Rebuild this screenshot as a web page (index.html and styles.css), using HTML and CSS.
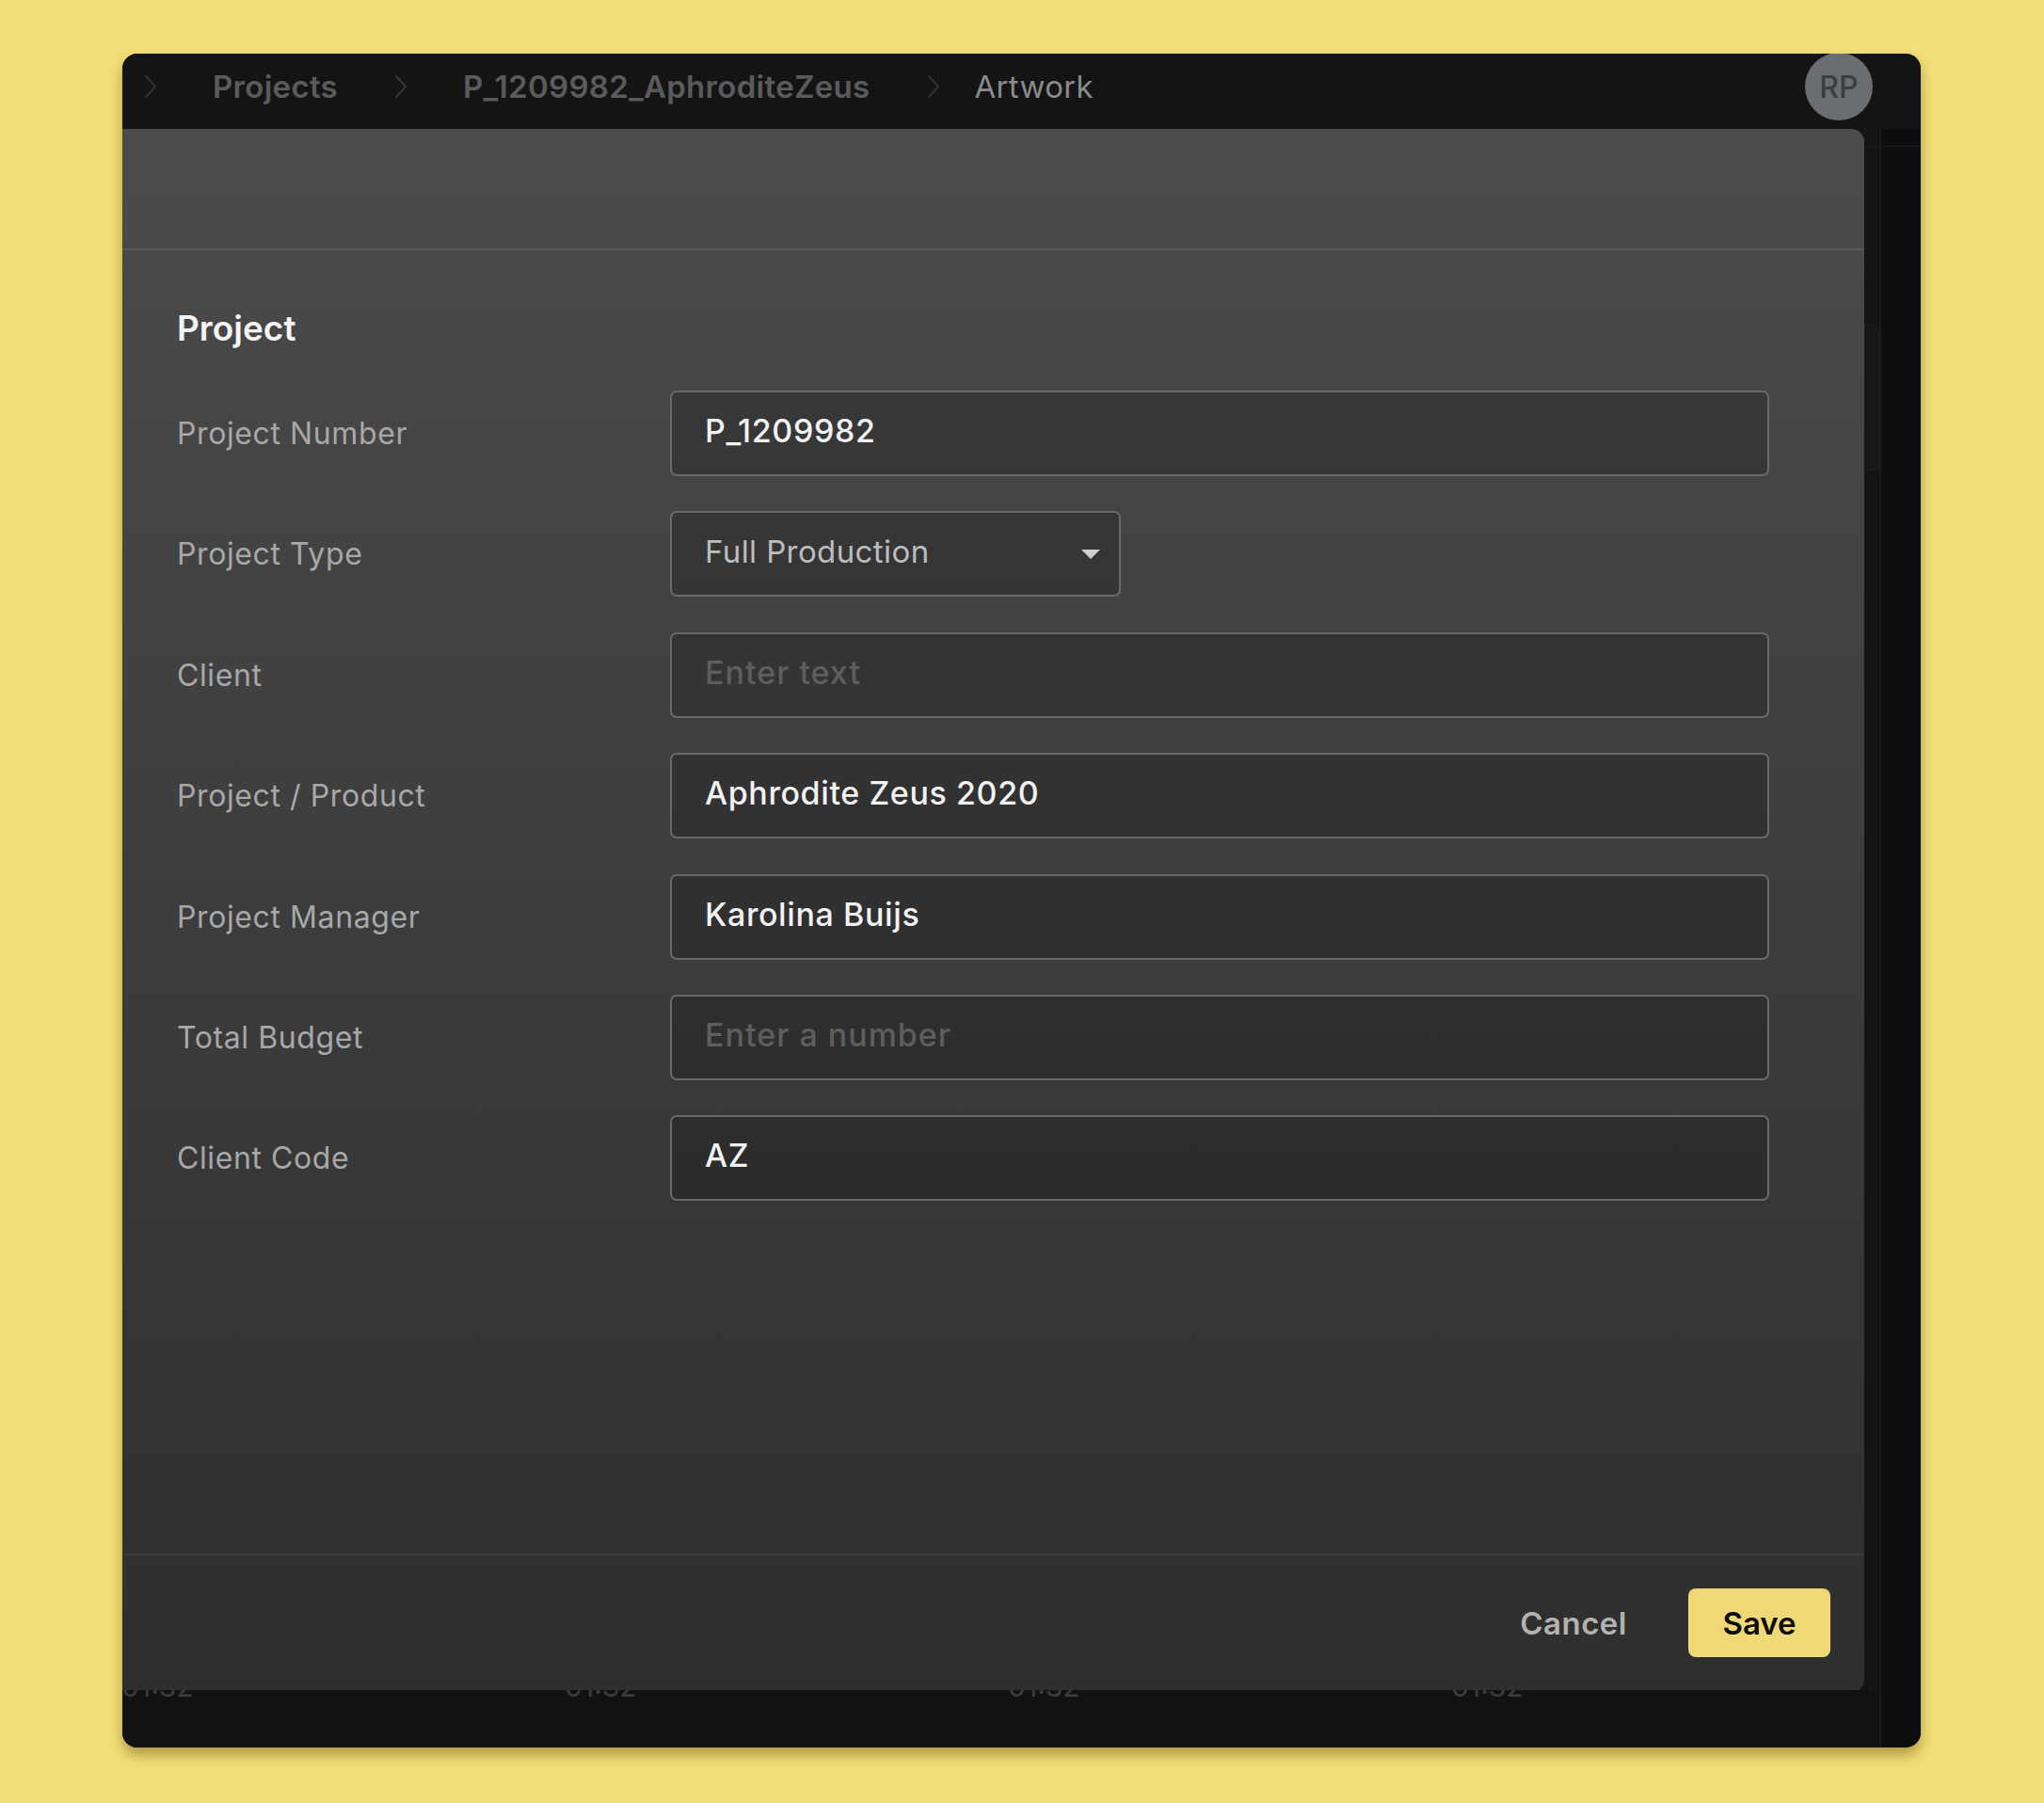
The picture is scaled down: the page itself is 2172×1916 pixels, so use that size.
FILE: index.html
```html
<!DOCTYPE html>
<html lang="en">

<head>
  <meta charset="UTF-8">
  <meta name="viewport" content="width=device-width, initial-scale=1.0">
  <title>Project</title>
  <link rel="stylesheet" href="styles.css">
</head>

<body>
  <div class="window">
    <div class="topbar">
      <div class="crumbs">
        <svg class="chev first_chev" width="16" height="30" viewBox="0 0 16 30"><path d="M3 4 L13 15 L3 26" fill="none" stroke="#353535" stroke-width="2" stroke-linecap="round" stroke-linejoin="round"/></svg>
        <span class="crumb">Projects</span>
        <svg class="chev" width="16" height="30" viewBox="0 0 16 30"><path d="M3 4 L13 15 L3 26" fill="none" stroke="#353535" stroke-width="2" stroke-linecap="round" stroke-linejoin="round"/></svg>
        <span class="crumb">P_1209982_AphroditeZeus</span>
        <svg class="chev" width="16" height="30" viewBox="0 0 16 30"><path d="M3 4 L13 15 L3 26" fill="none" stroke="#353535" stroke-width="2" stroke-linecap="round" stroke-linejoin="round"/></svg>
        <span class="crumb current">Artwork</span>
      </div>
      <div class="avatar">RP</div>
    </div>

    <div class="main">
      <div class="stage">
        <div class="stage_top">
          <div class="modal">
            <div class="modal_head"></div>

            <div class="modal_body">
              <div class="section_title">Project</div>

              <div class="rows">
                <div class="row">
                  <div class="label">Project Number</div>
                  <div class="field value">P_1209982</div>
                </div>
                <div class="row">
                  <div class="label">Project Type</div>
                  <div class="field select">
                    <span>Full Production</span>
                    <svg width="22" height="12" viewBox="0 0 22 12"><path d="M1 1 L21 1 L11 11 Z" fill="#cfcfcf"/></svg>
                  </div>
                </div>
                <div class="row">
                  <div class="label">Client</div>
                  <div class="field placeholder">Enter text</div>
                </div>
                <div class="row">
                  <div class="label">Project / Product</div>
                  <div class="field value">Aphrodite Zeus 2020</div>
                </div>
                <div class="row">
                  <div class="label">Project Manager</div>
                  <div class="field value">Karolina Buijs</div>
                </div>
                <div class="row">
                  <div class="label">Total Budget</div>
                  <div class="field placeholder">Enter a number</div>
                </div>
                <div class="row">
                  <div class="label">Client Code</div>
                  <div class="field value">AZ</div>
                </div>
              </div>
            </div>

            <div class="modal_foot">
              <button type="button" class="cancel_btn">Cancel</button>
              <button type="button" class="save_btn">Save</button>
            </div>
          </div>

          <div class="gutter">
            <div class="gutter_line"></div>
            <div class="gutter_panel"></div>
          </div>
        </div>

        <div class="timeline">
          <div class="tick first_tick">01:32</div>
          <div class="tick">01:32</div>
          <div class="tick">01:32</div>
          <div class="tick">01:32</div>
        </div>
      </div>

      <div class="rail">
        <div class="rail_line"></div>
      </div>
    </div>
  </div>
</body>

</html>
```

FILE: styles.css
```css
body {
  width: 2172px;
  height: 1916px;

  margin: 0;
  background-color: #f2df78;

  font-family: Inter, "Noto Sans", sans-serif;
  overflow: hidden;
}

.window {
  width: 1911px;
  height: 1800px;

  margin-left: 130px;
  margin-top: 57px;

  display: flex;
  flex-direction: column;

  background-color: #131313;
  border-radius: 16px;
  overflow: hidden;
  box-shadow: 0 8px 14px rgba(90, 70, 0, 0.45);
}

.topbar {
  height: 80px;

  display: flex;
  justify-content: space-between;
  align-items: center;

  flex-shrink: 0;
  background-color: #141414;
}

.crumbs {
  display: flex;
  align-items: center;

  margin-top: -10px;
}

.chev {
  margin: 0 58px 0 59px;
}

.first_chev {
  margin-left: 22px;
}

.crumb {
  font-size: 33px;
  font-weight: 600;
  letter-spacing: 0.3px;
  color: #5b5b5b;
}

.current {
  margin-left: -22px;
  font-weight: 400;
  color: #8b8b8b;
}

.avatar {
  width: 72px;
  height: 72px;

  display: flex;
  justify-content: center;
  align-items: center;

  margin-right: 51px;
  margin-top: -10px;

  border-radius: 50%;
  background-color: #6a6e72;
  color: #3b3e41;
  font-size: 32px;
  font-weight: 500;
}

.main {
  flex: 1;

  display: flex;
}

.stage {
  width: 1868px;

  display: flex;
  flex-direction: column;

  background-color: #131313;
}

.stage_top {
  flex: 1;

  display: flex;
}

.modal {
  width: 1851px;
  height: 1659px;

  display: flex;
  flex-direction: column;

  background: linear-gradient(180deg, #4b4b4b 0%, #3e3e3e 45%, #2e2e2e 100%);
  border-radius: 0 14px 14px 0;
  box-shadow: 0 2px 0 #3a3a3a;
}

.modal_head {
  height: 127px;

  border-bottom: 2px solid #575757;
}

.modal_body {
  flex: 1;

  padding: 60px 101px 0 58px;
}

.section_title {
  height: 44px;

  display: flex;
  align-items: center;

  font-size: 37px;
  font-weight: 600;
  color: #f4f4f4;
}

.rows {
  display: flex;
  flex-direction: column;
  gap: 37.4px;

  margin-top: 45px;
}

.row {
  height: 91px;

  display: flex;
  align-items: center;
}

.label {
  width: 524px;

  font-size: 32px;
  letter-spacing: 0.6px;
  color: #a8a8a8;
}

.field {
  flex: 1;
  height: 91px;

  display: flex;
  align-items: center;

  padding: 0 34px 6px 35px;
  box-sizing: border-box;

  border: 2px solid #696969;
  border-radius: 7px;
  background-color: rgba(0, 0, 0, 0.2);

  font-size: 34px;
  letter-spacing: 0.6px;
}

.value {
  font-weight: 500;
  color: #f2f2f2;
}

.placeholder {
  font-weight: 500;
  letter-spacing: 1px;
  color: #5e5e5e;
}

.select {
  flex: none;
  width: 479px;

  justify-content: space-between;

  padding-right: 19px;
  font-size: 33px;
  letter-spacing: 0.4px;
  color: #bdbdbd;
}

.select svg {
  margin-top: 6px;
}

.modal_foot {
  height: 143px;

  display: flex;
  justify-content: flex-end;
  align-items: center;

  padding-right: 36px;
  border-top: 2px solid #3b3b3b;
}

button {
  font-family: Inter, "Noto Sans", sans-serif;
  font-size: 32px;
  font-weight: 600;
  border: none;
  cursor: pointer;
}

.cancel_btn {
  margin-right: 65px;
  padding: 0;

  background: none;
  font-size: 33px;
  letter-spacing: 0.5px;
  color: #b2b2b2;
}

.save_btn {
  width: 151px;
  height: 73px;

  border-radius: 8px;
  background-color: #f1d877;
  color: #0c0c0c;
  font-size: 33px;
}

.gutter {
  flex: 1;

  background-color: #141414;
}

.gutter_line {
  height: 18px;

  border-bottom: 1px solid #1d1d1d;
}

.gutter_panel {
  width: 15px;
  height: 153px;

  margin-top: 189px;

  border: 1px solid #1f1f1f;
  border-left: none;
  border-radius: 0 8px 0 0;
  background-color: #171717;
}

.timeline {
  height: 61px;

  display: flex;
  overflow: hidden;
  background-color: #121212;
}

.tick {
  width: 471px;
  flex-shrink: 0;

  margin-top: -24px;

  font-size: 30px;
  line-height: 40px;
  color: #3c3c3c;
}

.first_tick {
  margin-left: -1px;
}

.rail {
  flex: 1;

  background-color: #0d0d0d;
  border-left: 1px solid #1e1e1e;
}

.rail_line {
  height: 18px;

  border-bottom: 1px solid #1d1d1d;
}
```
